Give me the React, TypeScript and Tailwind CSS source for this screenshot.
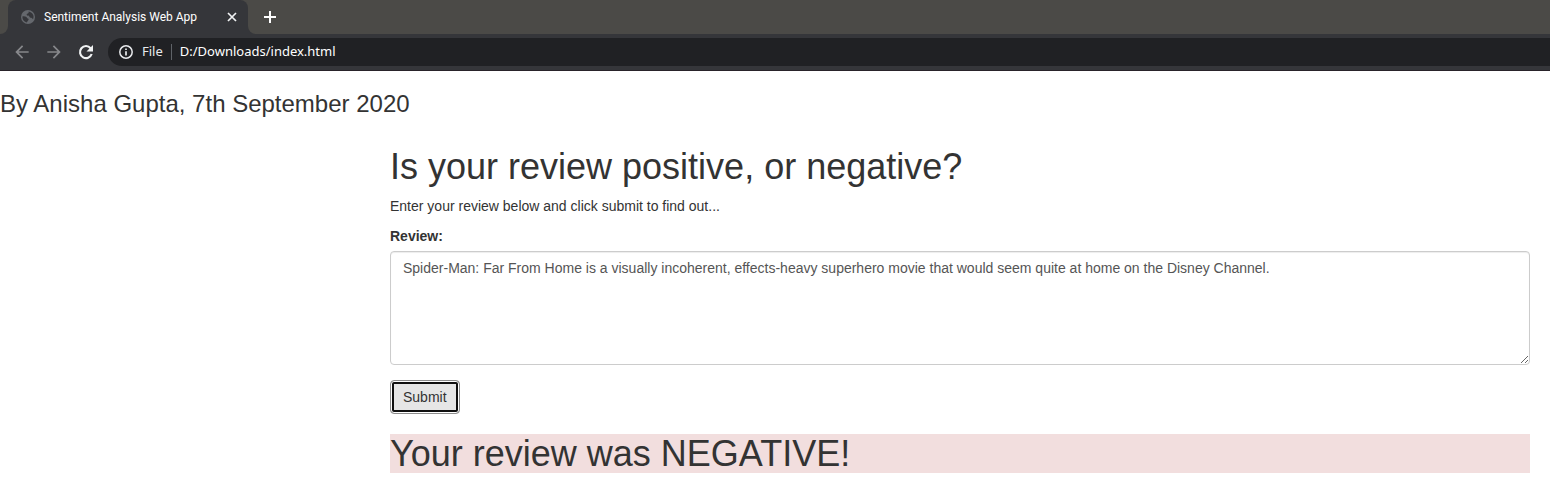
import { useState } from "react";
import { MdArrowBack, MdArrowForward } from "react-icons/md";

function GlobeIcon() {
  return (
    <svg viewBox="0 0 16 16" className="size-4" aria-hidden="true">
      <circle cx="8" cy="8" r="7" fill="#65686d" />
      <path
        d="M2.4 7.4 C4 7.2 5.6 7.4 6.4 8 C7 8.6 7 9.4 7.8 9.6 C8.8 9.8 8.8 10.4 8.4 11 C8 11.6 7.6 12.6 6.6 13.4 C3.8 12.6 2.2 10.2 2.4 7.4 Z"
        fill="#35363a"
      />
      <path
        d="M8.6 2.5 C10.6 2.7 12.6 4.2 13.3 6.2 C13.7 7.6 13.6 9 13 10.2 C12.2 9.6 12 9 11.2 8.8 C10 8.6 9.4 8 9.2 7.2 C9 6.4 7.4 6.8 6.8 6 C6.4 5.2 7 4.6 7.8 4.4 C8.6 4.2 8.8 3.4 8.6 2.5 Z"
        fill="#35363a"
      />
    </svg>
  );
}

function CloseIcon() {
  return (
    <svg viewBox="0 0 16 16" className="size-4" fill="none" stroke="currentColor" strokeWidth="1.7" aria-hidden="true">
      <path d="M4 4 L12 12 M12 4 L4 12" />
    </svg>
  );
}

function PlusIcon() {
  return (
    <svg viewBox="0 0 20 20" className="size-5" fill="none" stroke="currentColor" strokeWidth="2" aria-hidden="true">
      <path d="M10 4 V16 M4 10 H16" />
    </svg>
  );
}

function ReloadIcon() {
  return (
    <svg viewBox="0 0 20 20" className="size-5" aria-hidden="true">
      <path
        d="M14.6 6.2 A6 6 0 1 0 15.7 12"
        fill="none"
        stroke="currentColor"
        strokeWidth="2.1"
      />
      <path d="M17 3 V9.5 H10.5 Z" fill="currentColor" />
    </svg>
  );
}

function InfoIcon() {
  return (
    <svg viewBox="0 0 16 16" className="size-4" fill="none" stroke="currentColor" aria-hidden="true">
      <circle cx="8" cy="8" r="6.2" strokeWidth="1.5" />
      <path d="M8 7.2 V11.4 M8 4.5 V6.1" strokeWidth="1.7" />
    </svg>
  );
}

function TabStrip() {
  return (
    <div className="flex h-[34px] bg-[#4b4a47]">
      <div className="w-2 bg-[#35363a]">
        <div className="h-full rounded-br-lg bg-[#4b4a47]" />
      </div>
      <div className="flex w-60 items-center rounded-t-lg bg-[#35363a] pr-2 pl-3">
        <GlobeIcon />
        <span className="ml-2 grow whitespace-nowrap font-[Roboto,sans-serif] text-xs text-white">
          Sentiment Analysis Web App
        </span>
        <button type="button" aria-label="Close tab" className="text-[#f1f3f4]">
          <CloseIcon />
        </button>
      </div>
      <div className="w-2 bg-[#35363a]">
        <div className="h-full rounded-bl-lg bg-[#4b4a47]" />
      </div>
      <button type="button" aria-label="New tab" className="ml-1 flex w-5 items-center justify-center text-white">
        <PlusIcon />
      </button>
    </div>
  );
}

function Toolbar() {
  return (
    <div className="flex h-[37px] items-center border-b border-[#29232a] bg-[#35363a] pl-3">
      <button type="button" aria-label="Back" className="mr-3 text-[#87888b]">
        <MdArrowBack className="size-5" />
      </button>
      <button type="button" aria-label="Forward" className="mr-3 text-[#87888b]">
        <MdArrowForward className="size-5" />
      </button>
      <button type="button" aria-label="Reload" className="mr-3 text-[#f1f3f4]">
        <ReloadIcon />
      </button>
      <div className="flex h-7 grow items-center rounded-l-full bg-[#202124] pl-2.5 text-[13px]">
        <span className="text-[#e8eaed]">
          <InfoIcon />
        </span>
        <span className="ml-2 text-[#e8eaed]">File</span>
        <span className="mx-2 h-4 w-px bg-[#5f6368]" />
        <input
          aria-label="Address"
          defaultValue="D:/Downloads/index.html"
          className="grow bg-transparent text-white outline-none"
        />
      </div>
    </div>
  );
}

export default function App() {
  const [review, setReview] = useState(
    "Spider-Man: Far From Home is a visually incoherent, effects-heavy superhero movie that would seem quite at home on the Disney Channel."
  );

  return (
    <div className="min-h-screen bg-white">
      <header className="font-['Noto_Sans',sans-serif]">
        <TabStrip />
        <Toolbar />
      </header>
      <main className="pt-5 font-['Liberation_Sans',Arial,sans-serif] text-sm leading-5 text-[#333]">
        <h3 className="text-2xl leading-[26px]">By Anisha Gupta, 7th September 2020</h3>
        <div className="mt-[30px] mr-5 ml-[390px]">
          <h1 className="text-4xl leading-[39px]">Is your review positive, or negative?</h1>
          <p className="mt-2.5">Enter your review below and click submit to find out...</p>
          <form onSubmit={(event) => event.preventDefault()}>
            <label htmlFor="review" className="mt-2.5 mb-[5px] block font-bold">
              Review:
            </label>
            <textarea
              id="review"
              value={review}
              onChange={(event) => setReview(event.target.value)}
              className="block h-[114px] w-full resize rounded border border-[#ccc] px-3 py-1.5 text-[#555] shadow-[inset_0_1px_1px_rgba(0,0,0,0.075)] outline-none"
            />
            <button
              type="submit"
              className="mt-[15px] rounded border border-[#8c8c8c] bg-[#e6e6e6] px-3 py-1.5 shadow-[inset_0_0_0_1px_#fff,inset_0_0_0_3px_#101010] outline-none"
            >
              Submit
            </button>
          </form>
          <h1 className="mt-5 bg-[#f2dede] text-4xl leading-[39px]">Your review was NEGATIVE!</h1>
        </div>
      </main>
    </div>
  );
}
